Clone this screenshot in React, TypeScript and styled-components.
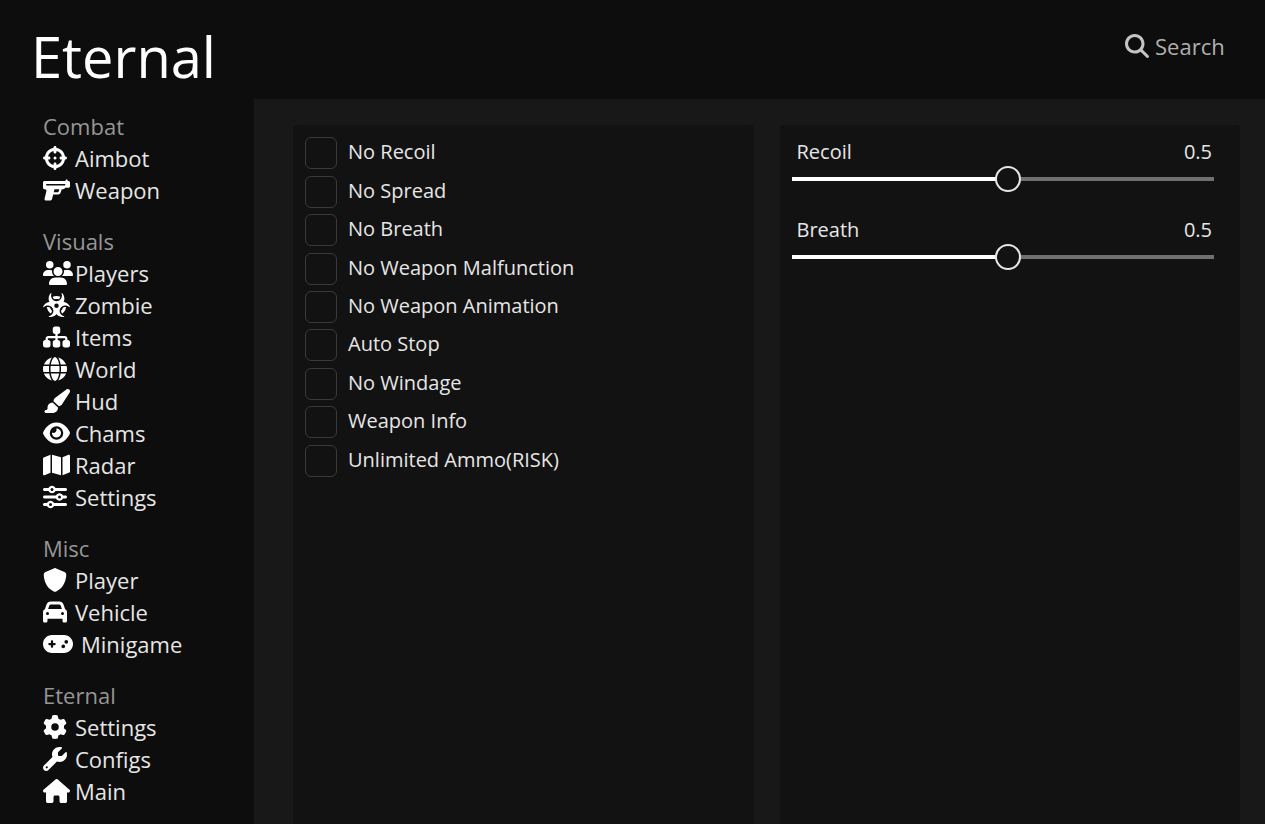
import React, { useState } from "react";
import styled, { createGlobalStyle } from "styled-components";
import type { IconType } from "react-icons";
import {
  FaBiohazard,
  FaCar,
  FaCrosshairs,
  FaEye,
  FaGamepad,
  FaGear,
  FaGlobe,
  FaGun,
  FaHouse,
  FaMagnifyingGlass,
  FaMap,
  FaPaintbrush,
  FaShield,
  FaSitemap,
  FaSliders,
  FaUsers,
  FaWrench,
} from "react-icons/fa6";

const GlobalStyle = createGlobalStyle`
  *, *::before, *::after { box-sizing: border-box; }
  body {
    margin: 0;
    background: #0d0d0d;
    color: #e6e6e6;
    font-family: "Open Sans", "Noto Sans", sans-serif;
  }
`;

const Page = styled.div`
  display: grid;
  grid-template: auto 1fr / 254px 1fr;
  grid-template-areas: "header header" "nav main";
  min-height: 100vh;
`;

const Header = styled.header`
  grid-area: header;
  display: flex;
  justify-content: space-between;
  align-items: flex-start;
  height: 99px;
  padding: 16px 32px 0 31px;
`;

const Brand = styled.h1`
  margin: 0;
  color: #fff;
  font-size: 56px;
  font-weight: 400;
  line-height: 80px;
`;

const SearchField = styled.label`
  display: flex;
  align-items: center;
  gap: 6px;
  margin-top: 14px;
  color: #c4c4c4;

  svg {
    width: 24px;
    height: 24px;
  }
`;

const SearchInput = styled.input`
  width: 78px;
  height: 32px;
  padding: 0;
  border: 0;
  outline: 0;
  background: transparent;
  color: #e6e6e6;
  font: inherit;
  font-size: 22px;

  &::placeholder {
    color: #b0b0b0;
    opacity: 1;
  }
`;

const Sidebar = styled.nav`
  grid-area: nav;
  display: flex;
  flex-direction: column;
  gap: 19px;
  padding: 11px 16px 16px 43px;
`;

const GroupTitle = styled.h2`
  margin: 0;
  color: #969696;
  font-size: 22px;
  font-weight: 400;
  line-height: 32px;
`;

const NavList = styled.ul`
  margin: 0;
  padding: 0;
  list-style: none;
`;

const NavLink = styled.a`
  display: flex;
  align-items: center;
  height: 32px;
  color: #e6e6e6;
  font-size: 22px;
  line-height: 32px;
  text-decoration: none;
`;

const NavIcon = styled.span<{ $width: number; $slot: number }>`
  display: flex;
  flex: none;
  width: ${(p) => p.$slot}px;
  color: #fff;

  svg {
    flex: none;
    width: ${(p) => p.$width}px;
    height: 24px;
  }
`;

const Main = styled.main`
  grid-area: main;
  display: grid;
  grid-template-columns: 1fr 1fr;
  gap: 26px;
  padding: 26px 25px 0 39px;
  background: #181818;
`;

const Panel = styled.section`
  padding: 9px 12px;
  border-radius: 4px 4px 0 0;
  background: #121212;
`;

const OptionList = styled.div`
  display: grid;
  grid-auto-rows: 1fr;
  height: 346px;
`;

const Option = styled.label`
  display: flex;
  align-items: center;
  gap: 11px;
  font-size: 20px;
  font-weight: 500;
  line-height: 32px;
`;

const OptionText = styled.span`
  padding-bottom: 2px;
`;

const Checkbox = styled.input`
  appearance: none;
  flex: none;
  width: 32px;
  height: 32px;
  margin: 0;
  border: 1px solid #3a3a3a;
  border-radius: 6px;
  background: #121212;

  &:checked {
    background: #e6e6e6;
  }
`;

const SliderField = styled.div`
  display: flex;
  flex-direction: column;
  height: 78px;
  padding: 0 14px 0 0;
`;

const SliderCaption = styled.div`
  display: flex;
  justify-content: space-between;
  padding: 3px 2px 0 5px;
  font-size: 20px;
  font-weight: 500;
  line-height: 29px;
`;

const Slider = styled.input`
  appearance: none;
  width: 100%;
  height: 26px;
  margin: 0;
  background: transparent;

  &::-webkit-slider-runnable-track {
    height: 4px;
    background: linear-gradient(to right, #fff var(--fill), #707070 var(--fill));
  }

  &::-webkit-slider-thumb {
    appearance: none;
    width: 26px;
    height: 26px;
    margin-top: -11px;
    border: 2px solid #e6e6e6;
    border-radius: 50%;
    background: #121212;
  }
`;

type NavEntry = { label: string; icon: IconType; width: number; slot?: number };

const groups: { title: string; items: NavEntry[] }[] = [
  {
    title: "Combat",
    items: [
      { label: "Aimbot", icon: FaCrosshairs, width: 24 },
      { label: "Weapon", icon: FaGun, width: 27 },
    ],
  },
  {
    title: "Visuals",
    items: [
      { label: "Players", icon: FaUsers, width: 30 },
      { label: "Zombie", icon: FaBiohazard, width: 27 },
      { label: "Items", icon: FaSitemap, width: 27 },
      { label: "World", icon: FaGlobe, width: 24 },
      { label: "Hud", icon: FaPaintbrush, width: 27 },
      { label: "Chams", icon: FaEye, width: 27 },
      { label: "Radar", icon: FaMap, width: 27 },
      { label: "Settings", icon: FaSliders, width: 24 },
    ],
  },
  {
    title: "Misc",
    items: [
      { label: "Player", icon: FaShield, width: 24 },
      { label: "Vehicle", icon: FaCar, width: 24 },
      { label: "Minigame", icon: FaGamepad, width: 30, slot: 38 },
    ],
  },
  {
    title: "Eternal",
    items: [
      { label: "Settings", icon: FaGear, width: 24 },
      { label: "Configs", icon: FaWrench, width: 24 },
      { label: "Main", icon: FaHouse, width: 27 },
    ],
  },
];

const options = [
  "No Recoil",
  "No Spread",
  "No Breath",
  "No Weapon Malfunction",
  "No Weapon Animation",
  "Auto Stop",
  "No Windage",
  "Weapon Info",
  "Unlimited Ammo(RISK)",
];

function SliderControl({ id, label }: { id: string; label: string }) {
  const [value, setValue] = useState(0.513);
  return (
    <SliderField>
      <SliderCaption>
        <label htmlFor={id}>{label}</label>
        <output htmlFor={id}>{value.toFixed(1)}</output>
      </SliderCaption>
      <Slider
        id={id}
        type="range"
        min={0}
        max={1}
        step={0.001}
        value={value}
        onChange={(e) => setValue(Number(e.target.value))}
        style={{ "--fill": `${value * 100}%` } as React.CSSProperties}
      />
    </SliderField>
  );
}

export default function App() {
  return (
    <>
      <GlobalStyle />
      <Page>
        <Header>
          <Brand>Eternal</Brand>
          <SearchField>
            <FaMagnifyingGlass aria-hidden />
            <SearchInput type="text" placeholder="Search" aria-label="Search" />
          </SearchField>
        </Header>
        <Sidebar>
          {groups.map((group) => (
            <div key={group.title}>
              <GroupTitle>{group.title}</GroupTitle>
              <NavList>
                {group.items.map(({ label, icon: Icon, width, slot = 32 }) => (
                  <li key={label}>
                    <NavLink href="#">
                      <NavIcon $width={width} $slot={slot}>
                        <Icon aria-hidden />
                      </NavIcon>
                      {label}
                    </NavLink>
                  </li>
                ))}
              </NavList>
            </div>
          ))}
        </Sidebar>
        <Main>
          <Panel>
            <OptionList>
              {options.map((option) => (
                <Option key={option}>
                  <Checkbox type="checkbox" />
                  <OptionText>{option}</OptionText>
                </Option>
              ))}
            </OptionList>
          </Panel>
          <Panel>
            <SliderControl id="recoil" label="Recoil" />
            <SliderControl id="breath" label="Breath" />
          </Panel>
        </Main>
      </Page>
    </>
  );
}
